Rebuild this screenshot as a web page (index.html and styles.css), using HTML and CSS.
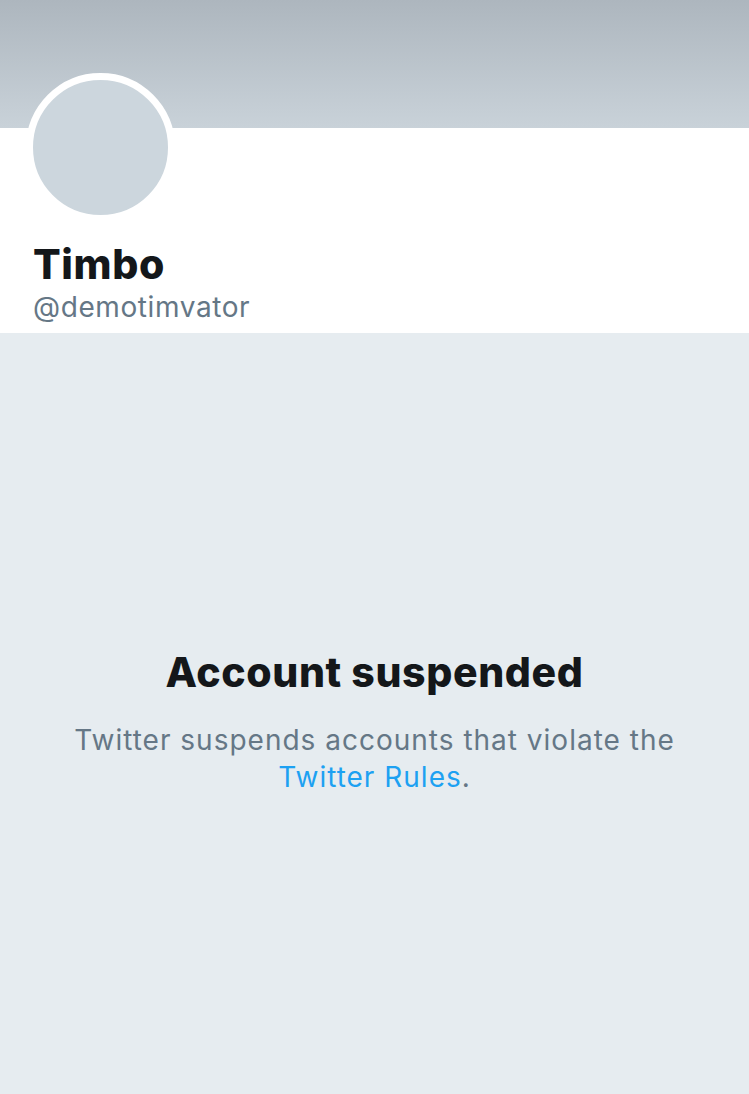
FILE: index.html
```html
<!DOCTYPE html>
<html>
<head>
<meta charset="utf-8">
<link rel="stylesheet" href="styles.css">
</head>
<body>
<div class="page">
  <header class="profile">
    <div class="banner"></div>
    <div class="info">
      <div class="avatar"></div>
      <h1 class="name">Timbo</h1>
      <div class="handle">@demotimvator</div>
    </div>
  </header>
  <main class="notice">
    <h2 class="title">Account suspended</h2>
    <p class="desc">Twitter suspends accounts that violate the <a class="link" href="#">Twitter Rules</a>.</p>
  </main>
</div>
</body>
</html>
```
FILE: styles.css
```css
* { box-sizing: border-box; }
html, body { margin: 0; padding: 0; }
body {
  font-family: Inter, "Liberation Sans", sans-serif;
  background: #e6ecf0;
}
.page {
  width: 749px;
  min-height: 1094px;
  display: flex;
  flex-direction: column;
}
.profile { background: #fff; }
.banner {
  height: 128px;
  background: linear-gradient(to bottom, #adb6be 0%, #c9d2d9 100%);
}
.info {
  padding: 0 0 9px 33px;
}
.avatar {
  width: 149px;
  height: 149px;
  margin: -55px 0 0 -7px;
  border-radius: 50%;
  background: #ccd6dd;
  border: 7px solid #fff;
}
.name {
  margin: 18px 0 0;
  font-size: 41px;
  font-weight: 800;
  line-height: 48px;
  letter-spacing: 0.6px;
  color: #14171a;
}
.handle {
  margin-top: 2px;
  font-size: 28px;
  line-height: 34px;
  letter-spacing: 0.6px;
  color: #657786;
}
.notice {
  flex: 1;
  display: flex;
  flex-direction: column;
  align-items: center;
  padding-top: 315px;
  text-align: center;
}
.title {
  margin: 0;
  font-size: 41px;
  font-weight: 800;
  line-height: 48px;
  letter-spacing: 0.6px;
  color: #14171a;
}
.desc {
  margin: 26px 0 0;
  width: 680px;
  font-size: 28px;
  line-height: 37px;
  letter-spacing: 1px;
  color: #657786;
}
.link {
  color: #1da1f2;
  text-decoration: none;
}
```
